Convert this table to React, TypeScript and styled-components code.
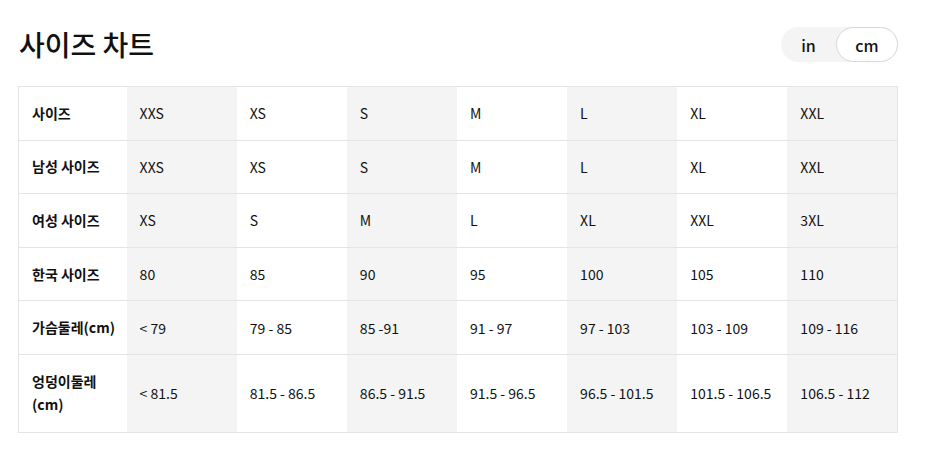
import styled, {createGlobalStyle} from "styled-components";

const GlobalStyle = createGlobalStyle`
    body {
        margin: 0;
        background: #ffffff;
        font-family: "Noto Sans CJK KR", "Noto Sans", sans-serif;
        color: #111111;
    }
`

const columns = ["XXS", "XS", "S", "M", "L", "XL", "XXL"];

const rows: { label: string; values: string[]; tall?: boolean }[] = [
    {label: "사이즈", values: columns},
    {label: "남성 사이즈", values: ["XXS", "XS", "S", "M", "L", "XL", "XXL"]},
    {label: "여성 사이즈", values: ["XS", "S", "M", "L", "XL", "XXL", "3XL"]},
    {label: "한국 사이즈", values: ["80", "85", "90", "95", "100", "105", "110"]},
    {label: "가슴둘레(cm)", values: ["< 79", "79 - 85", "85 -91", "91 - 97", "97 - 103", "103 - 109", "109 - 116"]},
    {
        label: "엉덩이둘레(cm)",
        values: ["< 81.5", "81.5 - 86.5", "86.5 - 91.5", "91.5 - 96.5", "96.5 - 101.5", "101.5 - 106.5", "106.5 - 112"],
        tall: true
    },
];

const App = () => {
    return (
        <Page>
            <GlobalStyle/>
            <Header>
                <Title>사이즈 차트</Title>
                <UnitToggle>
                    <UnitButton>in</UnitButton>
                    <UnitButton $active>cm</UnitButton>
                </UnitToggle>
            </Header>
            <ChartTable>
                <colgroup>
                    <col style={{width: 108}}/>
                    {columns.map((c) => <col key={c} style={{width: 110}}/>)}
                </colgroup>
                <tbody>
                {rows.map((row) => (
                    <Row key={row.label} $tall={row.tall}>
                        <LabelCell>{row.label}</LabelCell>
                        {row.values.map((v, i) => (
                            <ValueCell key={i} $shaded={i % 2 === 0}>{v}</ValueCell>
                        ))}
                    </Row>
                ))}
                </tbody>
            </ChartTable>
        </Page>
    );
};

const Page = styled.div`
    width: 880px;
    padding: 0 31px 0 18px;
`

const Header = styled.div`
    display: flex;
    align-items: center;
    justify-content: space-between;
    height: 86px;
    padding-top: 1px;
    box-sizing: border-box;
`

const Title = styled.h1`
    margin: 0 0 0 1px;
    font-size: 28px;
    font-weight: 500;
    color: #111111;
`

const UnitToggle = styled.div`
    display: flex;
    align-items: center;
    width: 117px;
    height: 35px;
    margin-top: 2px;
    border-radius: 18px;
    background: #f4f4f4;
`

const UnitButton = styled.div<{ $active?: boolean }>`
    display: flex;
    align-items: center;
    justify-content: center;
    height: 35px;
    box-sizing: border-box;
    font-size: 16px;
    font-weight: 500;
    color: #111111;
    width: ${({$active}) => ($active ? "62px" : "55px")};
    border-radius: 18px;
    background: ${({$active}) => ($active ? "#ffffff" : "transparent")};
    border: ${({$active}) => ($active ? "1px solid #d8d8d8" : "none")};
`

const ChartTable = styled.table`
    width: 880px;
    border-collapse: collapse;
    table-layout: fixed;
    border: 1px solid #e4e4e4;
`

const Row = styled.tr<{ $tall?: boolean }>`
    height: ${({$tall}) => ($tall ? "78px" : "53.6px")};
    border-bottom: 1px solid #e4e4e4;
`

const LabelCell = styled.td`
    padding: 0 6px 0 13px;
    font-size: 14px;
    font-weight: 700;
    line-height: 23px;
    color: #111111;
    background: #ffffff;
`

const ValueCell = styled.td<{ $shaded?: boolean }>`
    padding: 0 13px;
    font-size: 14px;
    font-weight: 400;
    color: #111111;
    white-space: nowrap;
    background: ${({$shaded}) => ($shaded ? "#f4f4f4" : "#ffffff")};
`

export default App;
